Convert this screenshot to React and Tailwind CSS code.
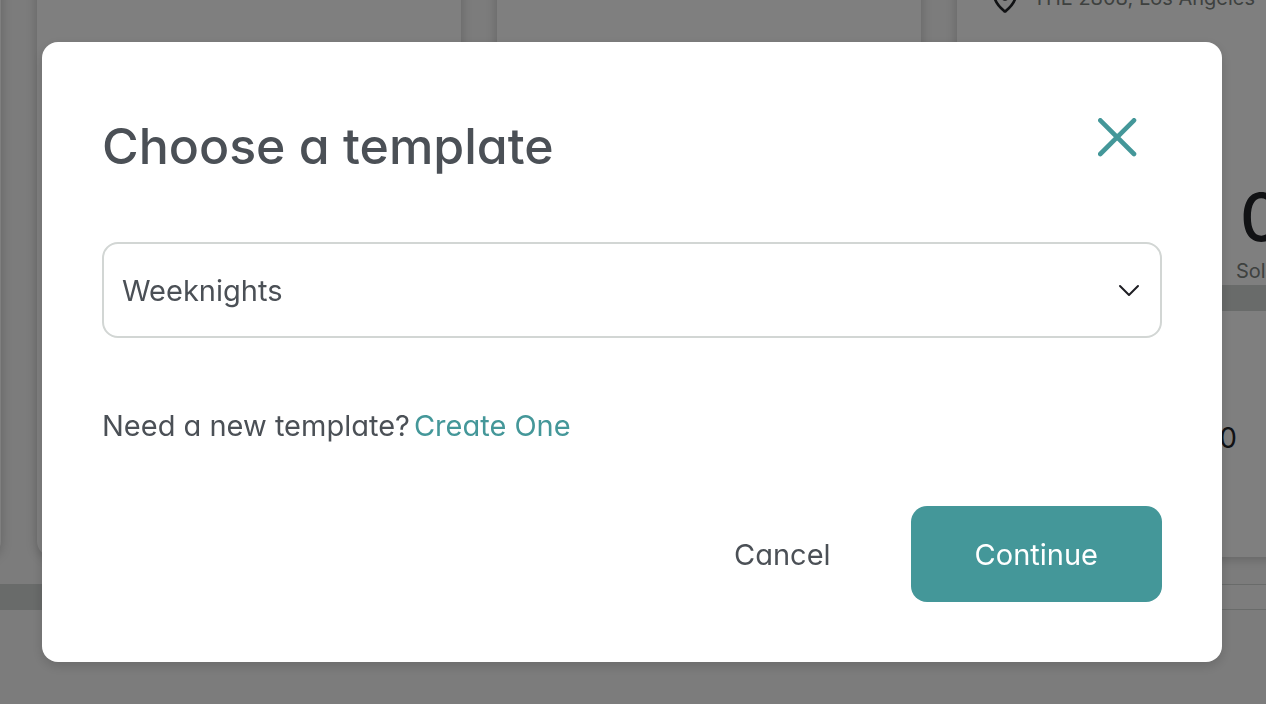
import { useState } from "react";
import { MapPin } from "lucide-react";

const templates = ["Weeknights", "Weekends", "Matinee"];

function EventCard({ children }) {
  return (
    <section className="w-[424px] shrink-0 overflow-hidden rounded-2xl bg-white shadow-[0_2px_12px_rgba(0,0,0,0.2)]">
      {children}
    </section>
  );
}

function VenueDetails() {
  return (
    <>
      <div className="flex items-center gap-3 pt-[14px] pl-8 text-[#7c8380]">
        <MapPin className="size-8 text-[#222428]" />
        <span className="text-xl leading-8">THE 2808, Los Angeles</span>
      </div>
      <div className="flex flex-col pt-[163px] pl-[279px]">
        <span className="pl-1 text-[66px] leading-[80px] font-medium text-[#222428]">
          0
        </span>
        <span className="text-xl leading-7 text-[#7c8380]">Sold</span>
      </div>
      <div className="h-[26px] bg-[#d2d6d4]" />
      <div className="w-[280px] pt-[109px] pb-[101px] text-right text-[28px] leading-9 text-[#222428]">
        0
      </div>
    </>
  );
}

function EventsPage() {
  return (
    <main className="h-screen overflow-hidden bg-[#f8f8f8]">
      <div className="-mt-8 -ml-[423px] flex gap-9 pb-[27px]">
        <EventCard />
        <EventCard />
        <EventCard />
        <EventCard>
          <VenueDetails />
        </EventCard>
      </div>
      <div className="h-[26px] border-y border-[#d2d6d4] bg-[#fafafa]">
        <div className="h-full w-1/2 bg-[#d2d6d4]" />
      </div>
    </main>
  );
}

function TemplateDialog() {
  const [template, setTemplate] = useState(templates[0]);

  return (
    <div
      role="dialog"
      aria-modal="true"
      aria-labelledby="dialog-title"
      className="w-full rounded-2xl bg-white p-[60px] text-[29px] leading-9 text-[#4b5056] shadow-[0_4px_12px_rgba(0,0,0,0.15)]"
    >
      <header className="flex items-start justify-between">
        <h2
          id="dialog-title"
          className="text-[50px] leading-[88px] font-medium"
        >
          Choose a template
        </h2>
        <button
          type="button"
          aria-label="Close"
          className="mt-3 mr-5 flex size-12 items-center justify-center text-[#449799]"
        >
          <svg viewBox="0 0 40 40" className="size-10" fill="none">
            <path
              d="M2.3 2.3L36 36M36 2.3L2.3 36"
              stroke="currentColor"
              strokeWidth="4.6"
              strokeLinecap="round"
            />
          </svg>
        </button>
      </header>

      <div className="mt-[52px] grid items-center">
        <select
          aria-label="Template"
          value={template}
          onChange={(e) => setTemplate(e.target.value)}
          className="col-start-1 row-start-1 h-24 w-full appearance-none rounded-2xl border-2 border-[#d2d6d4] bg-white px-[18px] pt-[2px]"
        >
          {templates.map((name) => (
            <option key={name}>{name}</option>
          ))}
        </select>
        <svg
          viewBox="0 0 24 24"
          className="pointer-events-none col-start-1 row-start-1 mr-5 size-6 justify-self-end"
          fill="none"
        >
          <path
            d="M2 8L11 17L20 8"
            stroke="#1f1f24"
            strokeWidth="2"
            strokeLinecap="round"
            strokeLinejoin="round"
          />
        </svg>
      </div>

      <p className="mt-[70px] flex gap-1">
        Need a new template?
        <a href="#create" className="text-[#449799]">
          Create One
        </a>
      </p>

      <footer className="mt-[62px] flex items-center justify-end gap-4">
        <button type="button" className="h-24 px-16 pt-[2px]">
          Cancel
        </button>
        <button
          type="button"
          className="h-24 rounded-2xl bg-[#449799] px-16 pt-[2px] text-white"
        >
          Continue
        </button>
      </footer>
    </div>
  );
}

export default function App() {
  return (
    <div className="font-['Inter',sans-serif] [font-feature-settings:'cv11']">
      <EventsPage />
      <div className="fixed inset-0 flex items-start bg-black/50 py-[42px] pr-11 pl-[42px]">
        <TemplateDialog />
      </div>
    </div>
  );
}
